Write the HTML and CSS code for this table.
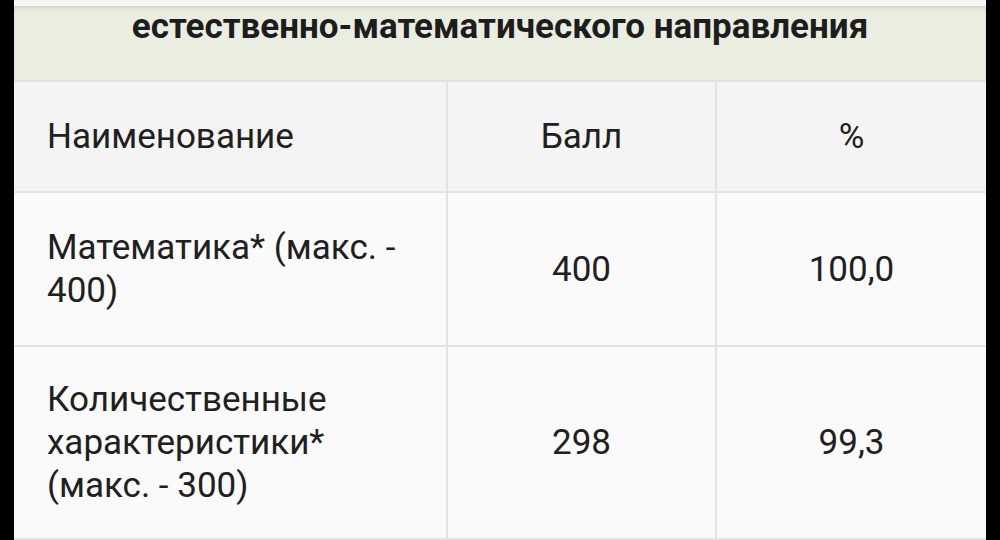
FILE: index.html
```html
<!DOCTYPE html>
<html lang="ru">
<head>
<meta charset="utf-8">
<link rel="stylesheet" href="styles.css">
</head>
<body>
<div class="page">
  <div class="title">естественно-математического направления</div>
  <table class="scores">
    <colgroup>
      <col class="c-name">
      <col class="c-ball">
      <col class="c-pct">
    </colgroup>
    <tr class="head">
      <td class="name">Наименование</td>
      <td>Балл</td>
      <td>%</td>
    </tr>
    <tr>
      <td class="name">Математика* (макс. - 400)</td>
      <td>400</td>
      <td>100,0</td>
    </tr>
    <tr class="last">
      <td class="name">Количественные характеристики* (макс. - 300)</td>
      <td>298</td>
      <td>99,3</td>
    </tr>
  </table>
</div>
</body>
</html>
```

FILE: styles.css
```css
html, body {
  margin: 0;
  padding: 0;
  background: #000;
  height: 540px;
  overflow: hidden;
}
.page {
  margin: 0 14px;
  width: 972px;
  height: 540px;
  background: #f6f6f6;
  padding-top: 6px;
  box-sizing: border-box;
  font-family: Roboto, "Noto Sans", sans-serif;
  color: #202020;
}
.title {
  height: 76px;
  box-sizing: border-box;
  background: #eaeee1;
  box-shadow: inset 0 4px 4px -2px rgba(0,0,0,0.12);
  border-bottom: 2px solid #dfe1da;
  font-weight: bold;
  font-size: 35px;
  line-height: 42px;
  padding-top: 0;
  text-align: center;
  color: #1d1d1d;
}
.scores {
  width: 972px;
  border-collapse: collapse;
  table-layout: fixed;
  font-size: 35px;
  line-height: 43px;
}
.c-name { width: 433px; }
.c-ball { width: 269px; }
.c-pct { width: 270px; }
.scores td {
  border: 2px solid #e3e3e3;
  padding: 33px 20px;
  text-align: center;
  vertical-align: middle;
  background: #fafafa;
}
.scores td:first-child { border-left: none; }
.scores td:last-child { border-right: none; }
.scores tr:first-child td { border-top: none; }
.scores .head td { background: #f4f4f4; }
.scores .last td { padding-top: 31px; padding-bottom: 31px; }
.scores td.name {
  text-align: left;
  padding-left: 33px;
  padding-right: 20px;
}
```
